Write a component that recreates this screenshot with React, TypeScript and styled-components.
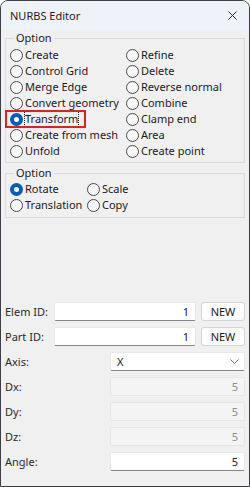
import React from "react";
import styled, { createGlobalStyle } from "styled-components";

const Global = createGlobalStyle`
  html, body { margin: 0; padding: 0; background: #ffffff; }
  body { font-family: "Noto Sans", "Open Sans", sans-serif; font-size: 11px; color: #1b1b1b; }
  * { box-sizing: border-box; }
`;

const Window = styled.div`
  width: 250px;
  height: 487px;
  border: 1px solid #3c3f45;
  border-radius: 8px 8px 0 0;
  background: #f0f0f0;
  overflow: hidden;
  display: flex;
  flex-direction: column;
`;

const TitleBar = styled.div`
  height: 29px;
  background: #eef3f9;
  display: flex;
  align-items: center;
  justify-content: space-between;
  padding: 0 12px 0 9px;
  font-size: 11px;
  color: #1b1b1b;
`;

const Content = styled.div`
  padding: 0 4px;
  display: flex;
  flex-direction: column;
`;

const Group = styled.fieldset<{ $mt: number; $pb: number }>`
  margin: ${(p) => p.$mt}px 0 0 0;
  padding: 0 0 ${(p) => p.$pb}px 4px;
  border: 1px solid #dadada;
  min-width: 0;
`;

const Legend = styled.legend`
  padding: 0 2px;
  margin-left: 4px;
  line-height: 16px;
  font-size: 11px;
`;

const RadioGrid = styled.div<{ $col: number; $pt: number }>`
  display: grid;
  grid-template-columns: ${(p) => p.$col}px 1fr;
  grid-auto-rows: 16px;
  padding-top: ${(p) => p.$pt}px;
`;

const RadioItem = styled.label`
  position: relative;
  display: flex;
  align-items: center;
  gap: 1px;
  white-space: nowrap;
  line-height: 16px;
`;

const Circle = styled.span<{ $on?: boolean }>`
  width: 13px;
  height: 13px;
  border-radius: 50%;
  flex: none;
  box-sizing: border-box;
  border: ${(p) => (p.$on ? "4px solid #005fb8" : "1px solid #4a4a4a")};
  background: ${(p) => (p.$on ? "#ffffff" : "#f7f7f7")};
`;

const Caption = styled.span<{ $focus?: boolean }>`
  padding: 0 1px;
  outline: ${(p) => (p.$focus ? "1px dotted #202020" : "none")};
  outline-offset: -1px;
  line-height: 16px;
`;

const Highlight = styled.span`
  position: absolute;
  left: -5px;
  top: -1px;
  width: 81px;
  height: 18px;
  border: 2px solid #e3201b;
  pointer-events: none;
`;

const Form = styled.div`
  margin-top: 84px;
  display: flex;
  flex-direction: column;
  gap: 6px;
`;

const Row = styled.div<{ $label: number }>`
  display: grid;
  grid-template-columns: ${(p) => p.$label}px 1fr auto;
  align-items: center;
  height: 19px;
  column-gap: 5px;
`;

const Label = styled.span`
  color: #2a2a2a;
  white-space: nowrap;
`;

const Field = styled.div<{ $disabled?: boolean; $span?: boolean }>`
  height: 19px;
  grid-column: ${(p) => (p.$span ? "2 / 4" : "auto")};
  background: ${(p) => (p.$disabled ? "#f4f4f4" : "#ffffff")};
  border: 1px solid ${(p) => (p.$disabled ? "#e6e6e6" : "#e8e8e8")};
  border-bottom-color: ${(p) => (p.$disabled ? "#e6e6e6" : "#868686")};
  border-radius: 2px;
  color: ${(p) => (p.$disabled ? "#8c8c8c" : "#1b1b1b")};
  display: flex;
  align-items: center;
  justify-content: flex-end;
  padding: 0 6px;
  line-height: 17px;
`;

const Select = styled(Field)`
  justify-content: space-between;
  padding: 0 5px 0 6px;
`;

const Button = styled.button`
  width: 44px;
  height: 19px;
  padding: 0;
  background: #fdfdfd;
  border: 1px solid #d5d5d5;
  border-radius: 3px;
  font-family: inherit;
  font-size: 11px;
  color: #1b1b1b;
  line-height: 17px;
`;

type Opt = { text: string; on?: boolean; mark?: boolean };

const col1: Opt[] = [
  { text: "Create" },
  { text: "Control Grid" },
  { text: "Merge Edge" },
  { text: "Convert geometry" },
  { text: "Transform", on: true, mark: true },
  { text: "Create from mesh" },
  { text: "Unfold" },
];
const col2: Opt[] = [
  { text: "Refine" },
  { text: "Delete" },
  { text: "Reverse normal" },
  { text: "Combine" },
  { text: "Clamp end" },
  { text: "Area" },
  { text: "Create point" },
];

const interleave = (a: Opt[], b: Opt[]) => a.flatMap((x, i) => [x, b[i]]);

const Radio = ({ o }: { o: Opt }) => (
  <RadioItem>
    <Circle $on={o.on} />
    <Caption $focus={o.mark}>{o.text}</Caption>
    {o.mark && <Highlight />}
  </RadioItem>
);

export default function App() {
  return (
    <>
      <Global />
      <Window>
        <TitleBar>
          <span>NURBS Editor</span>
          <svg width="9" height="9" viewBox="0 0 9 9">
            <path d="M0.5 0.5 L8.5 8.5 M8.5 0.5 L0.5 8.5" stroke="#333" strokeWidth="1" />
          </svg>
        </TitleBar>
        <Content>
          <Group $mt={0} $pb={3}>
            <Legend>Option</Legend>
            <RadioGrid $col={116} $pt={1}>
              {interleave(col1, col2).map((o) => (
                <Radio key={o.text} o={o} />
              ))}
            </RadioGrid>
          </Group>
          <Group $mt={2} $pb={4}>
            <Legend>Option</Legend>
            <RadioGrid $col={77} $pt={0}>
              <Radio o={{ text: "Rotate", on: true }} />
              <Radio o={{ text: "Scale" }} />
              <Radio o={{ text: "Translation" }} />
              <Radio o={{ text: "Copy" }} />
            </RadioGrid>
          </Group>
          <Form>
            <Row $label={44}>
              <Label>Elem ID:</Label>
              <Field>1</Field>
              <Button>NEW</Button>
            </Row>
            <Row $label={44}>
              <Label>Part ID:</Label>
              <Field>1</Field>
              <Button>NEW</Button>
            </Row>
            <Row $label={100}>
              <Label>Axis:</Label>
              <Select $span>
                <span>X</span>
                <svg width="9" height="5" viewBox="0 0 9 5">
                  <path d="M0.5 0.5 L4.5 4.5 L8.5 0.5" stroke="#6a6a6a" strokeWidth="1" fill="none" />
                </svg>
              </Select>
            </Row>
            <Row $label={100}>
              <Label>Dx:</Label>
              <Field $disabled $span>5</Field>
            </Row>
            <Row $label={100}>
              <Label>Dy:</Label>
              <Field $disabled $span>5</Field>
            </Row>
            <Row $label={100}>
              <Label>Dz:</Label>
              <Field $disabled $span>5</Field>
            </Row>
            <Row $label={100}>
              <Label>Angle:</Label>
              <Field $span>5</Field>
            </Row>
          </Form>
        </Content>
      </Window>
    </>
  );
}
